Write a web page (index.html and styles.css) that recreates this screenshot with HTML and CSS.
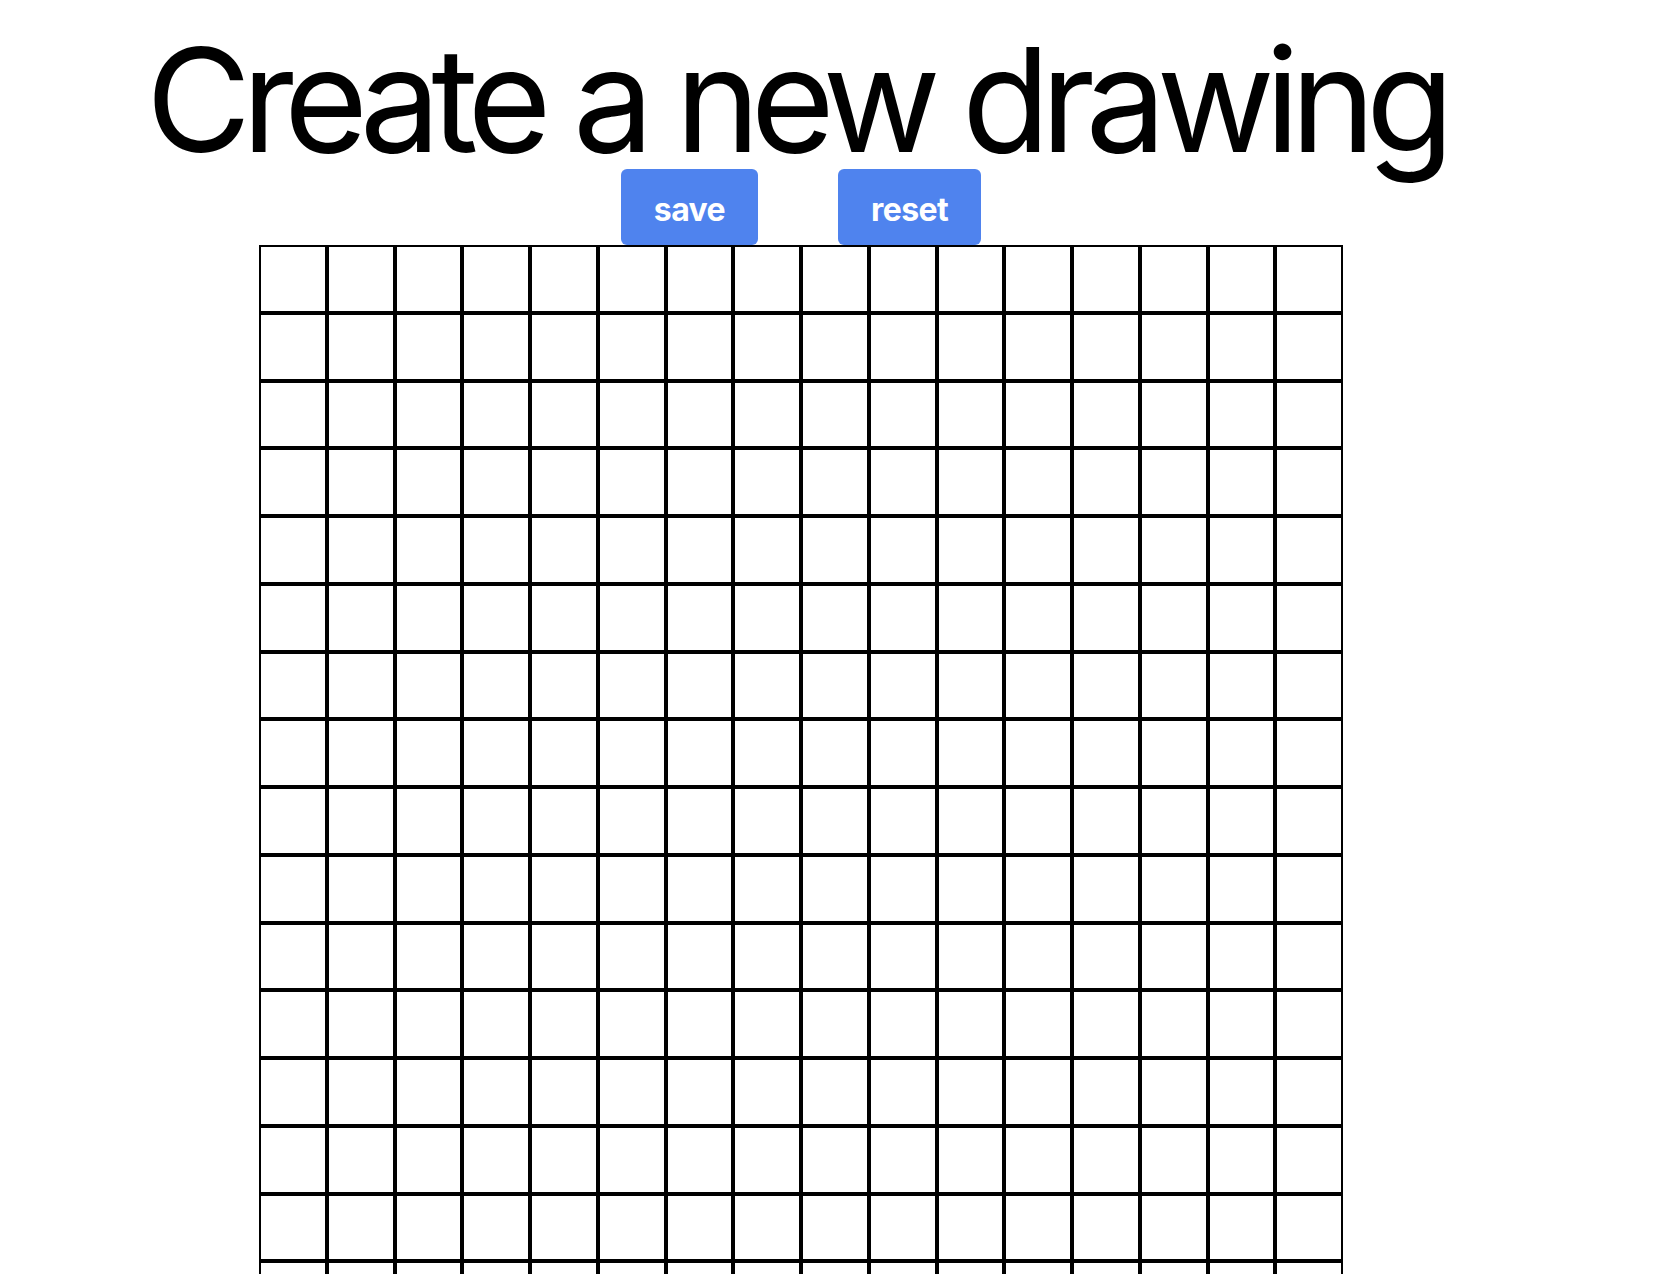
FILE: index.html
```html
<!DOCTYPE html>
<html lang="en">
<head>
<meta charset="utf-8">
<title>Create a new drawing</title>
<link rel="stylesheet" href="styles.css">
</head>
<body>
<h1 class="title">Create a new drawing</h1>
<div class="board">
  <div class="actions">
    <button class="btn" type="button">save</button>
    <button class="btn" type="button">reset</button>
  </div>
  <div class="grid">
    <div class="cell"></div><div class="cell"></div><div class="cell"></div><div class="cell"></div><div class="cell"></div><div class="cell"></div><div class="cell"></div><div class="cell"></div><div class="cell"></div><div class="cell"></div><div class="cell"></div><div class="cell"></div><div class="cell"></div><div class="cell"></div><div class="cell"></div><div class="cell"></div>
    <div class="cell"></div><div class="cell"></div><div class="cell"></div><div class="cell"></div><div class="cell"></div><div class="cell"></div><div class="cell"></div><div class="cell"></div><div class="cell"></div><div class="cell"></div><div class="cell"></div><div class="cell"></div><div class="cell"></div><div class="cell"></div><div class="cell"></div><div class="cell"></div>
    <div class="cell"></div><div class="cell"></div><div class="cell"></div><div class="cell"></div><div class="cell"></div><div class="cell"></div><div class="cell"></div><div class="cell"></div><div class="cell"></div><div class="cell"></div><div class="cell"></div><div class="cell"></div><div class="cell"></div><div class="cell"></div><div class="cell"></div><div class="cell"></div>
    <div class="cell"></div><div class="cell"></div><div class="cell"></div><div class="cell"></div><div class="cell"></div><div class="cell"></div><div class="cell"></div><div class="cell"></div><div class="cell"></div><div class="cell"></div><div class="cell"></div><div class="cell"></div><div class="cell"></div><div class="cell"></div><div class="cell"></div><div class="cell"></div>
    <div class="cell"></div><div class="cell"></div><div class="cell"></div><div class="cell"></div><div class="cell"></div><div class="cell"></div><div class="cell"></div><div class="cell"></div><div class="cell"></div><div class="cell"></div><div class="cell"></div><div class="cell"></div><div class="cell"></div><div class="cell"></div><div class="cell"></div><div class="cell"></div>
    <div class="cell"></div><div class="cell"></div><div class="cell"></div><div class="cell"></div><div class="cell"></div><div class="cell"></div><div class="cell"></div><div class="cell"></div><div class="cell"></div><div class="cell"></div><div class="cell"></div><div class="cell"></div><div class="cell"></div><div class="cell"></div><div class="cell"></div><div class="cell"></div>
    <div class="cell"></div><div class="cell"></div><div class="cell"></div><div class="cell"></div><div class="cell"></div><div class="cell"></div><div class="cell"></div><div class="cell"></div><div class="cell"></div><div class="cell"></div><div class="cell"></div><div class="cell"></div><div class="cell"></div><div class="cell"></div><div class="cell"></div><div class="cell"></div>
    <div class="cell"></div><div class="cell"></div><div class="cell"></div><div class="cell"></div><div class="cell"></div><div class="cell"></div><div class="cell"></div><div class="cell"></div><div class="cell"></div><div class="cell"></div><div class="cell"></div><div class="cell"></div><div class="cell"></div><div class="cell"></div><div class="cell"></div><div class="cell"></div>
    <div class="cell"></div><div class="cell"></div><div class="cell"></div><div class="cell"></div><div class="cell"></div><div class="cell"></div><div class="cell"></div><div class="cell"></div><div class="cell"></div><div class="cell"></div><div class="cell"></div><div class="cell"></div><div class="cell"></div><div class="cell"></div><div class="cell"></div><div class="cell"></div>
    <div class="cell"></div><div class="cell"></div><div class="cell"></div><div class="cell"></div><div class="cell"></div><div class="cell"></div><div class="cell"></div><div class="cell"></div><div class="cell"></div><div class="cell"></div><div class="cell"></div><div class="cell"></div><div class="cell"></div><div class="cell"></div><div class="cell"></div><div class="cell"></div>
    <div class="cell"></div><div class="cell"></div><div class="cell"></div><div class="cell"></div><div class="cell"></div><div class="cell"></div><div class="cell"></div><div class="cell"></div><div class="cell"></div><div class="cell"></div><div class="cell"></div><div class="cell"></div><div class="cell"></div><div class="cell"></div><div class="cell"></div><div class="cell"></div>
    <div class="cell"></div><div class="cell"></div><div class="cell"></div><div class="cell"></div><div class="cell"></div><div class="cell"></div><div class="cell"></div><div class="cell"></div><div class="cell"></div><div class="cell"></div><div class="cell"></div><div class="cell"></div><div class="cell"></div><div class="cell"></div><div class="cell"></div><div class="cell"></div>
    <div class="cell"></div><div class="cell"></div><div class="cell"></div><div class="cell"></div><div class="cell"></div><div class="cell"></div><div class="cell"></div><div class="cell"></div><div class="cell"></div><div class="cell"></div><div class="cell"></div><div class="cell"></div><div class="cell"></div><div class="cell"></div><div class="cell"></div><div class="cell"></div>
    <div class="cell"></div><div class="cell"></div><div class="cell"></div><div class="cell"></div><div class="cell"></div><div class="cell"></div><div class="cell"></div><div class="cell"></div><div class="cell"></div><div class="cell"></div><div class="cell"></div><div class="cell"></div><div class="cell"></div><div class="cell"></div><div class="cell"></div><div class="cell"></div>
    <div class="cell"></div><div class="cell"></div><div class="cell"></div><div class="cell"></div><div class="cell"></div><div class="cell"></div><div class="cell"></div><div class="cell"></div><div class="cell"></div><div class="cell"></div><div class="cell"></div><div class="cell"></div><div class="cell"></div><div class="cell"></div><div class="cell"></div><div class="cell"></div>
    <div class="cell"></div><div class="cell"></div><div class="cell"></div><div class="cell"></div><div class="cell"></div><div class="cell"></div><div class="cell"></div><div class="cell"></div><div class="cell"></div><div class="cell"></div><div class="cell"></div><div class="cell"></div><div class="cell"></div><div class="cell"></div><div class="cell"></div><div class="cell"></div>
  </div>
</div>
</body>
</html>
```
FILE: styles.css
```css
html, body {
  margin: 0;
  padding: 0;
  background: #ffffff;
}

body {
  font-family: Inter, "Liberation Sans", sans-serif;
  color: #000000;
}

.title {
  margin: 28px 0 -3px 146px;
  font-size: 144px;
  font-weight: 400;
  line-height: 1;
  letter-spacing: -9.5px;
  white-space: nowrap;
}

.board {
  width: 1084px;
  margin-left: 259px;
  display: flex;
  flex-direction: column;
}

.actions {
  display: flex;
  justify-content: center;
  gap: 80px;
}

.btn {
  height: 76px;
  padding: 5px 33px 0;
  border: none;
  border-radius: 6px;
  background: #4f83ee;
  color: #ffffff;
  font-family: Inter, "Liberation Sans", sans-serif;
  font-size: 32px;
  font-weight: 700;
  letter-spacing: -0.6px;
  cursor: pointer;
}

.grid {
  display: grid;
  grid-template-columns: repeat(16, 67.75px);
  grid-auto-rows: 67.75px;
}

.cell {
  box-sizing: border-box;
  border: 2px solid #000000;
  background: #ffffff;
}
```
